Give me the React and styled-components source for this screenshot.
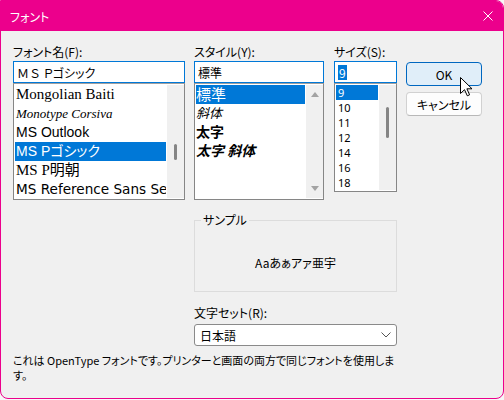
import React from 'react';
import styled, { createGlobalStyle } from 'styled-components';

const PINK = '#ec008c';
const BLUE = '#0078d7';

const GlobalStyle = createGlobalStyle`
  html, body { margin: 0; padding: 0; background: #f7f7f7; }
  body {
    font-family: "Noto Sans CJK JP", "Noto Sans", sans-serif;
    font-size: 12px;
    font-feature-settings: "palt";
    color: #000;
  }
  * { box-sizing: border-box; }
`;

const Window = styled.div`
  position: relative;
  width: 504px;
  height: 399px;
  display: flex;
  flex-direction: column;
  background: #f0f0f0;
  border: 1px solid ${PINK};
  border-radius: 0 8px 8px 8px;
  overflow: hidden;
`;

const TitleBar = styled.div`
  height: 30px;
  flex: none;
  display: flex;
  align-items: center;
  justify-content: space-between;
  padding: 0 10px 0 9px;
  background: ${PINK};
  color: #fff;
  font-size: 12px;
`;

const Body = styled.div`
  flex: 1;
  display: flex;
  flex-direction: column;
  padding: 11px 0 0 12px;
`;

const TopRow = styled.div`
  display: flex;
  align-items: flex-start;
`;

const Column = styled.div`
  width: ${p => p.$w}px;
  margin-right: ${p => p.$mr || 0}px;
  display: flex;
  flex-direction: column;
  flex: none;
`;

const Label = styled.div`
  line-height: 19px;
  height: 19px;
  white-space: nowrap;
  margin-top: ${p => p.$mt || 0}px;
`;

const TextInput = styled.div`
  height: 22px;
  border: 1px solid ${BLUE};
  background: #fff;
  padding: 0 3px;
  display: flex;
  align-items: center;
  white-space: pre;
  overflow: hidden;
`;

const Wide = styled.span`
  font-feature-settings: normal;
`;

const Selected = styled.span`
  background: ${BLUE};
  color: #fff;
  line-height: 15px;
  padding: 0 1px;
`;

const ListBox = styled.div`
  height: ${p => p.$h}px;
  border: 1px solid #868686;
  border-top-color: #a0a0a0;
  background: #fff;
  padding: 1px 0 1px 1px;
  display: flex;
  gap: 1px;
`;

const Items = styled.div`
  flex: 1;
  min-width: 0;
  overflow: ${p => (p.$clip ? 'hidden' : 'visible')};
  display: flex;
  flex-direction: column;
`;

const Item = styled.div`
  flex: none;
  height: ${p => p.$h}px;
  line-height: ${p => p.$h}px;
  padding-left: ${p => p.$pl ?? 1}px;
  white-space: nowrap;
  font-family: ${p => p.$font || 'inherit'};
  font-size: ${p => p.$size || 12}px;
  font-style: ${p => (p.$italic ? 'italic' : 'normal')};
  font-weight: ${p => (p.$bold ? 700 : 400)};
  background: ${p => (p.$selected ? BLUE : 'transparent')};
  color: ${p => (p.$selected ? '#fff' : '#000')};
`;

const ScrollTrack = styled.div`
  width: 17px;
  flex: none;
  background: #f0f0f0;
  display: flex;
  flex-direction: column;
  align-items: center;
  justify-content: ${p => (p.$arrows ? 'space-between' : 'flex-start')};
  padding: ${p => (p.$arrows ? '7px 0' : '0')};
`;

const Thumb = styled.div`
  width: 3px;
  height: ${p => p.$h}px;
  margin-top: ${p => p.$top}px;
  border-radius: 2px;
  background: #858585;
`;

const ButtonColumn = styled.div`
  width: 76px;
  flex: none;
  display: flex;
  flex-direction: column;
  gap: 6px;
  padding-top: 20px;
`;

const Button = styled.div`
  height: 24px;
  display: flex;
  align-items: center;
  justify-content: center;
  border-radius: 4px;
  font-size: 12px;
  background: ${p => (p.$primary ? '#e0eef9' : '#fdfdfd')};
  border: 1px solid ${p => (p.$primary ? '#0067c0' : '#d1d1d1')};
  border-bottom-color: ${p => (p.$primary ? '#0067c0' : '#b8b8b8')};
`;

const Lower = styled.div`
  margin-left: 181px;
  width: 203px;
  display: flex;
  flex-direction: column;
`;

const GroupBox = styled.fieldset`
  margin: 13px 0 0 0;
  padding: 0;
  min-width: 0;
  border: 1px solid #dcdcdc;
`;

const Legend = styled.legend`
  margin-left: 6px;
  padding: 0 2px;
  line-height: 14px;
  font-size: 12px;
`;

const SampleArea = styled.div`
  height: 58px;
  margin-top: 6px;
  display: flex;
  align-items: center;
  justify-content: center;
  font-size: 12px;
`;

const Select = styled.div`
  height: 22px;
  margin-top: 2px;
  border: 1px solid #8a8a8a;
  border-radius: 3px;
  background: #fff;
  display: flex;
  align-items: center;
  justify-content: space-between;
  padding: 0 5px 0 5px;
`;

const Note = styled.div`
  margin-top: 7px;
  font-size: 11px;
  line-height: 15px;
  white-space: nowrap;
`;

const Cursor = styled.svg`
  position: absolute;
  left: 459px;
  top: 76px;
`;

const Arrow = ({ down }) => (
  <svg width="8" height="5" viewBox="0 0 8 5">
    <polygon points={down ? '0,0 8,0 4,5' : '0,5 8,5 4,0'} fill="#a3a3a3" />
  </svg>
);

const fontItems = [
  { name: 'Mongolian Baiti', font: '"Liberation Serif", serif', size: 15 },
  { name: 'Monotype Corsiva', font: '"Liberation Serif", serif', size: 13, italic: true },
  { name: 'MS Outlook', font: '"Liberation Sans", sans-serif', size: 14 },
  { name: 'MS Pゴシック', font: '"Liberation Sans", "Noto Sans CJK JP", sans-serif', size: 14, selected: true },
  { name: 'MS P明朝', font: '"Liberation Serif", "Noto Sans CJK JP", serif', size: 15 },
  { name: 'MS Reference Sans Serif', font: '"DejaVu Sans", sans-serif', size: 13.6 },
];

const styleItems = [
  { name: '標準', size: 15, selected: true },
  { name: '斜体', size: 13, italic: true },
  { name: '太字', size: 14, bold: true },
  { name: '太字 斜体', size: 14, bold: true, italic: true },
];

const sizes = ['9', '10', '11', '12', '14', '16', '18'];

export default function App() {
  return (
    <>
      <GlobalStyle />
      <Window>
        <TitleBar>
          <span>フォント</span>
          <svg width="10" height="10" viewBox="0 0 10 10">
            <path d="M0.5 0.5 L9.5 9.5 M9.5 0.5 L0.5 9.5" stroke="#fff" strokeWidth="1" />
          </svg>
        </TitleBar>
        <Body>
          <TopRow>
            <Column $w={172} $mr={9}>
              <Label>フォント名(F):</Label>
              <TextInput>
                <Wide>ＭＳ</Wide> Ｐゴシック
              </TextInput>
              <ListBox $h={117}>
                <Items $clip>
                  {fontItems.map(f => (
                    <Item
                      key={f.name}
                      $h={19}
                      $font={f.font}
                      $size={f.size}
                      $italic={f.italic}
                      $selected={f.selected}
                    >
                      {f.name}
                    </Item>
                  ))}
                </Items>
                <ScrollTrack>
                  <Thumb $h={16} $top={59} />
                </ScrollTrack>
              </ListBox>
            </Column>
            <Column $w={130} $mr={10}>
              <Label>スタイル(Y):</Label>
              <TextInput>標準</TextInput>
              <ListBox $h={117}>
                <Items>
                  {styleItems.map(s => (
                    <Item
                      key={s.name}
                      $h={18.5}
                      $pl={0}
                      $size={s.size}
                      $italic={s.italic}
                      $bold={s.bold}
                      $selected={s.selected}
                    >
                      {s.name}
                    </Item>
                  ))}
                </Items>
                <ScrollTrack $arrows>
                  <Arrow />
                  <Arrow down />
                </ScrollTrack>
              </ListBox>
            </Column>
            <Column $w={63} $mr={9}>
              <Label>サイズ(S):</Label>
              <TextInput>
                <Selected>9</Selected>
              </TextInput>
              <ListBox $h={109}>
                <Items>
                  {sizes.map((s, i) => (
                    <Item
                      key={s}
                      $h={15}
                      $pl={2}
                      $font='"Noto Sans", sans-serif'
                      $size={11}
                      $selected={i === 0}
                    >
                      {s}
                    </Item>
                  ))}
                </Items>
                <ScrollTrack>
                  <Thumb $h={31} $top={22} />
                </ScrollTrack>
              </ListBox>
            </Column>
            <ButtonColumn>
              <Button $primary>OK</Button>
              <Button>キャンセル</Button>
            </ButtonColumn>
          </TopRow>
          <Lower>
            <GroupBox>
              <Legend>サンプル</Legend>
              <SampleArea>Aaあぁアァ亜宇</SampleArea>
            </GroupBox>
            <Label $mt={11}>文字セット(R):</Label>
            <Select>
              <span>日本語</span>
              <svg width="10" height="6" viewBox="0 0 10 6">
                <path d="M0.5 0.5 L5 5 L9.5 0.5" fill="none" stroke="#555" strokeWidth="1" />
              </svg>
            </Select>
          </Lower>
          <Note>
            これは OpenType フォントです。プリンターと画面の両方で同じフォントを使用しま
            <br />
            す。
          </Note>
        </Body>
        <Cursor width="13" height="20" viewBox="0 0 13 20">
          <path
            d="M0.5 0.5 L0.5 16.5 L4.5 12.7 L7.3 18.8 L9.6 17.8 L6.9 11.8 L12 11.8 Z"
            fill="#fff"
            stroke="#000"
            strokeWidth="1"
            strokeLinejoin="round"
          />
        </Cursor>
      </Window>
    </>
  );
}
